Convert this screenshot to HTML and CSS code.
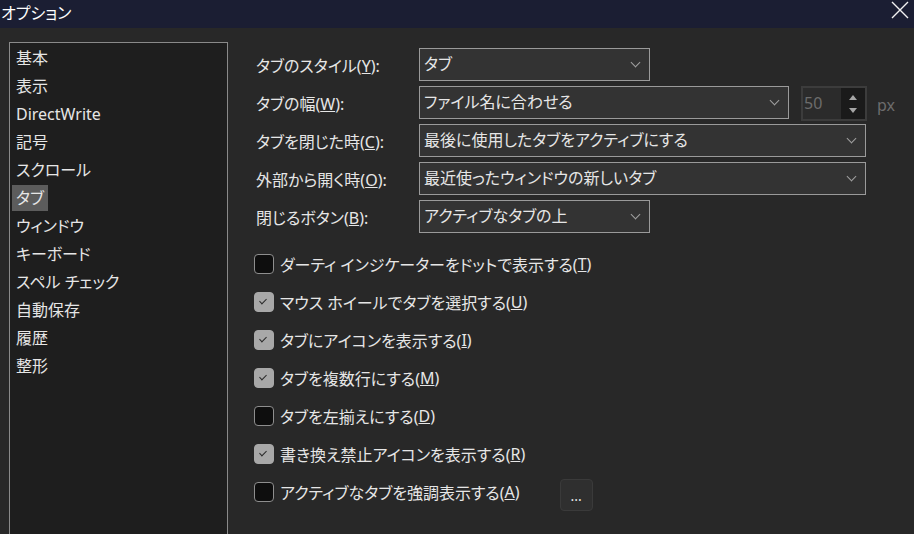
FILE: index.html
```html
<!DOCTYPE html>
<html lang="ja">
<head>
    <meta charset="UTF-8">
    <title>オプション</title>
    <link rel="stylesheet" href="styles.css">
</head>
<body>

<div class="titlebar">
    <span class="title">オプション</span>
    <svg class="close" width="18" height="18" viewBox="0 0 18 18">
        <path d="M1 1L17 17M17 1L1 17" stroke="#f2f2f2" stroke-width="1.4" fill="none"/>
    </svg>
</div>

<div class="main">
    <ul class="category-list">
        <li><span>基本</span></li>
        <li><span>表示</span></li>
        <li><span>DirectWrite</span></li>
        <li><span>記号</span></li>
        <li><span>スクロール</span></li>
        <li class="selected"><span>タブ</span></li>
        <li><span>ウィンドウ</span></li>
        <li><span>キーボード</span></li>
        <li><span>スペル チェック</span></li>
        <li><span>自動保存</span></li>
        <li><span>履歴</span></li>
        <li><span>整形</span></li>
    </ul>

    <div class="panel">
        <div class="form-row">
            <label>タブのスタイル(<u>Y</u>):</label>
            <div class="select short">タブ<i class="chev"></i></div>
        </div>
        <div class="form-row">
            <label>タブの幅(<u>W</u>):</label>
            <div class="select medium">ファイル名に合わせる<i class="chev"></i></div>
            <div class="spin">
                <span class="spin-value">50</span>
                <span class="spin-arrows">
                    <svg width="10" height="26" viewBox="0 0 10 26">
                        <path d="M1 9L5 4L9 9Z" fill="#a6a6a6"/>
                        <path d="M1 17L5 22L9 17Z" fill="#a6a6a6"/>
                    </svg>
                </span>
            </div>
            <span class="unit">px</span>
        </div>
        <div class="form-row">
            <label>タブを閉じた時(<u>C</u>):</label>
            <div class="select long">最後に使用したタブをアクティブにする<i class="chev"></i></div>
        </div>
        <div class="form-row">
            <label>外部から開く時(<u>O</u>):</label>
            <div class="select long">最近使ったウィンドウの新しいタブ<i class="chev"></i></div>
        </div>
        <div class="form-row">
            <label>閉じるボタン(<u>B</u>):</label>
            <div class="select short">アクティブなタブの上<i class="chev"></i></div>
        </div>

        <div class="checks">
            <div class="check-row"><span class="box"></span>ダーティ インジケーターをドットで表示する(<u>T</u>)</div>
            <div class="check-row"><span class="box on"></span>マウス ホイールでタブを選択する(<u>U</u>)</div>
            <div class="check-row"><span class="box on"></span>タブにアイコンを表示する(<u>I</u>)</div>
            <div class="check-row"><span class="box on"></span>タブを複数行にする(<u>M</u>)</div>
            <div class="check-row"><span class="box"></span>タブを左揃えにする(<u>D</u>)</div>
            <div class="check-row"><span class="box on"></span>書き換え禁止アイコンを表示する(<u>R</u>)</div>
            <div class="check-row"><span class="box"></span>アクティブなタブを強調表示する(<u>A</u>)<button class="more">...</button></div>
        </div>
    </div>
</div>

</body>
</html>
```

FILE: styles.css
```css
body {
    margin: 0;
    background: #282828;
    color: #e6e6e6;
    font-family: "Noto Sans", "Noto Sans CJK JP", sans-serif;
    font-size: 16px;
    font-feature-settings: "palt";
    height: 534px;
    overflow: hidden;
}
.titlebar {
    height: 28px;
    background: #1b1e33;
    display: flex;
    align-items: center;
    justify-content: space-between;
}
.title {
    color: #ffffff;
    font-size: 16px;
    padding-left: 1px;
    margin-top: -4px;
}
.close {
    margin-right: 5px;
    margin-top: -8px;
}
.main {
    display: flex;
}
.category-list {
    list-style: none;
    margin: 14px 0 0 9px;
    padding: 1px 0 0 0;
    width: 217px;
    height: 500px;
    background: #1e1e1e;
    border: 1px solid #8a8a8a;
}
.category-list li {
    height: 28px;
    padding-left: 2px;
}
.category-list li span {
    display: inline-block;
    line-height: 26px;
    margin-top: 1px;
    padding: 0 4px;
}
.category-list li.selected span {
    background: #5c5c5c;
}
.panel {
    padding: 20px 0 0 28px;
}
.form-row {
    display: flex;
    align-items: center;
    height: 33px;
    margin-bottom: 5px;
}
.form-row label {
    width: 163px;
}
.select {
    position: relative;
    box-sizing: border-box;
    height: 33px;
    line-height: 31px;
    padding-left: 4px;
    background: #333333;
    border: 1px solid #9a9a9a;
}
.select.short { width: 231px; }
.select.medium { width: 370px; }
.select.long { width: 447px; }
.chev {
    position: absolute;
    right: 10px;
    top: 10px;
    width: 6px;
    height: 6px;
    border-right: 1px solid #a0a0a0;
    border-bottom: 1px solid #a0a0a0;
    transform: rotate(45deg);
}
.spin {
    display: flex;
    box-sizing: border-box;
    margin-left: 12px;
    width: 66px;
    height: 35px;
    margin-top: 2px;
    border: 2px solid #3c3c3c;
    background: #2b2b2b;
}
.spin-value {
    flex: 1;
    color: #6c6c6c;
    line-height: 31px;
    padding-left: 1px;
}
.spin-arrows {
    width: 24px;
    background: #1a1a1a;
    display: flex;
    justify-content: center;
    align-items: center;
}
.unit {
    margin-left: 10px;
    margin-top: 4px;
    color: #6c6c6c;
}
.checks {
    margin-top: 12px;
}
.check-row {
    display: flex;
    align-items: center;
    height: 38px;
    margin-left: -2px;
}
.box {
    box-sizing: border-box;
    width: 20px;
    height: 20px;
    margin-right: 6px;
    border: 1px solid #8e8e8e;
    border-radius: 4px;
    background: #0e0e0e;
    position: relative;
}
.box.on {
    border-color: #a8a8a8;
    background: #a8a8a8;
}
.box.on::after {
    content: "";
    position: absolute;
    left: 6px;
    top: 4px;
    width: 3px;
    height: 6px;
    border-right: 1px solid #2a2a2a;
    border-bottom: 1px solid #2a2a2a;
    transform: rotate(45deg);
}
.more {
    margin-left: 40px;
    margin-top: 6px;
    width: 33px;
    height: 32px;
    background: #2f2f2f;
    border: 1px solid #3a3a3a;
    border-radius: 4px;
    color: #e6e6e6;
    font-family: inherit;
    font-size: 14px;
    padding: 0;
}
```
